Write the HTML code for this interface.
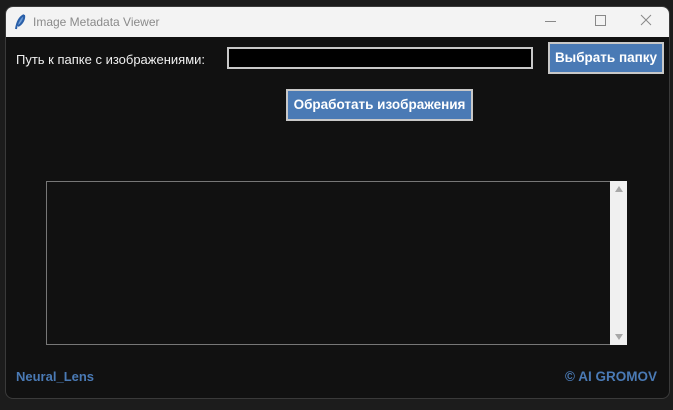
<!DOCTYPE html>
<html><head><style>
body{margin:0;width:673px;height:410px;background:#1c1c1c;font-family:"Liberation Sans",sans-serif;position:relative;overflow:hidden}
.win{position:absolute;left:5px;top:6px;width:663px;height:391px;border:1px solid #3a3a3a;border-radius:8px;background:#111;overflow:hidden}
.tb{position:absolute;left:0;top:0;width:100%;height:30px;background:#f3f3f3}
.t{position:absolute;color:#8a8a8a;font-size:12px}
.a{position:absolute}
.btn{position:absolute;background:#4a7ab5;border:2px solid #c8c8c8;color:#fff;font-weight:bold;font-size:13.5px;text-align:center;box-sizing:border-box;white-space:nowrap}
</style></head><body>
<div class="win">
<div class="tb">
<svg class="a" style="left:8px;top:7px" width="12" height="16"><path d="M10 1 C6 3 3 8 2 15 M10 1 C11 5 8 10 4 12" stroke="#2a5fa8" stroke-width="2" fill="#5b8fd0"/></svg>
<div class="t" style="left:27px;top:8px">Image Metadata Viewer</div>
<div class="a" style="left:539px;top:14px;width:11px;height:1px;background:#888"></div>
<div class="a" style="left:589px;top:8px;width:9px;height:9px;border:1px solid #888"></div>
<svg class="a" style="left:634px;top:7px" width="12" height="12"><path d="M1 1L11 11M11 1L1 11" stroke="#888" stroke-width="1"/></svg>
</div>
</div>
<div class="a" style="left:16px;top:52px;color:#f0f0f0;font-size:13px">Путь к папке с изображениями:</div>
<div class="a" style="left:227px;top:47px;width:302px;height:18px;background:#000;border:2px solid #c8c8c8"></div>
<div class="btn" style="left:548px;top:42px;width:116px;height:32px;line-height:28px">Выбрать папку</div>
<div class="btn" style="left:286px;top:89px;width:187px;height:32px;line-height:28px">Обработать изображения</div>
<div class="a" style="left:46px;top:181px;width:563px;height:162px;border:1px solid #777;border-right:none;background:#111"></div>
<div class="a" style="left:610px;top:181px;width:17px;height:164px;background:#f0f0f0"></div>
<svg class="a" style="left:614px;top:185px" width="10" height="8"><path d="M5 1L9 7H1Z" fill="#a8a8a8"/></svg>
<svg class="a" style="left:614px;top:333px" width="10" height="8"><path d="M1 1H9L5 7Z" fill="#a8a8a8"/></svg>
<div class="a" style="left:16px;top:369px;color:#4a7ab5;font-weight:bold;font-size:13px">Neural_Lens</div>
<div class="a" style="left:565px;top:369px;color:#4a7ab5;font-weight:bold;font-size:13.5px">© AI GROMOV</div>
</body></html>
